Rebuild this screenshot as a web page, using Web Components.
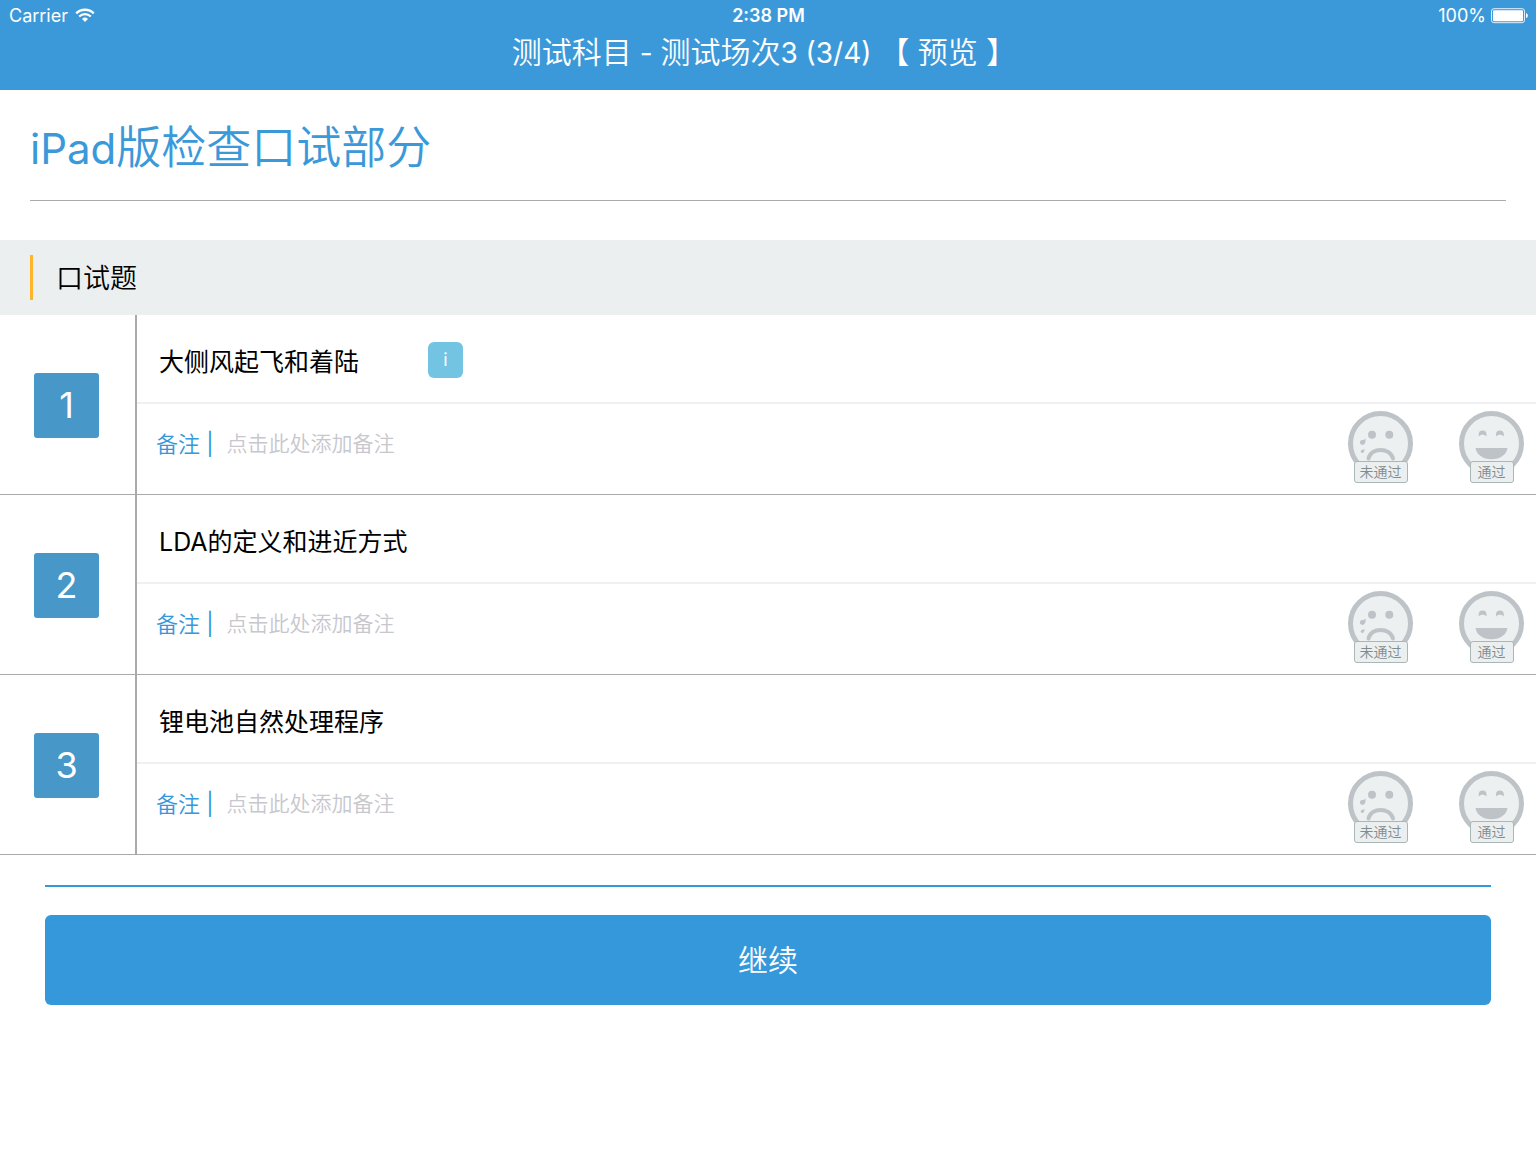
<!DOCTYPE html>
<html lang="zh-CN">
<head>
<meta charset="utf-8">
<meta name="viewport" content="width=device-width, initial-scale=1">
<title>测试科目</title>
<style>
  :root { --blue: #3b99d9; --line: #aaaaaa; --pale: #ebeff0; }
  body { margin: 0; background: #fff; color: #000; font-family: Inter, "Noto Sans CJK SC", sans-serif; font-weight: 400; }
</style>
</head>
<body>
<exam-page></exam-page>

<template id="t-page">
  <style>
    :host { display: block; }
    .latin { font-weight: 400; line-height: 1; }
    exam-header .latin { font-size: 28px; }
    page-title .latin { font-size: 42px; }
    .foot { margin: 30px 45px 0; border-top: 2px solid #3498db; padding-top: 28px; }
    button { display: block; width: 100%; height: 90px; border: 0; border-radius: 6px; background: #3498db; color: #fff; font: 350 30px/40px Inter, "Noto Sans CJK SC", sans-serif; }
  </style>
  <exam-header><span slot="title">测试科目<span class="latin"> - </span>测试场次<span class="latin">3 (3/4) </span>【 预览 】</span></exam-header>
  <main>
    <page-title><span class="latin">iPad</span>版检查口试部分</page-title>
    <section-title>口试题</section-title>
    <oral-question number="1" info>大侧风起飞和着陆</oral-question>
    <oral-question number="2">LDA的定义和进近方式</oral-question>
    <oral-question number="3">锂电池自然处理程序</oral-question>
    <div class="foot"><button type="button">继续</button></div>
  </main>
</template>

<template id="t-header">
  <style>
    :host { display: block; background: var(--blue); color: #fff; height: 90px; }
    .status { display: grid; grid-template-columns: 1fr auto 1fr; align-items: center; height: 31px; padding: 0 8px 0 9px; font-size: 18px; line-height: 22px; }
    .side { display: flex; align-items: center; gap: 7px; }
    .end { justify-content: flex-end; gap: 5px; }
    .time { font-weight: 600; }
    svg { display: block; }
    h1 { margin: 0; padding-right: 8px; font-size: 30px; line-height: 43px; font-weight: 350; text-align: center; }
  </style>
  <div class="status">
    <div class="side"><span>Carrier</span>
      <svg width="20" height="15" viewBox="0 0 20 15" fill="none" stroke="#fff" aria-hidden="true">
        <path d="M1.2 5.4a12.4 12.4 0 0 1 17.6 0" stroke-width="2.3"/>
        <path d="M4.2 8.5a8.2 8.2 0 0 1 11.6 0" stroke-width="2.1"/>
        <path d="M10 14l-3-3.1a4.3 4.3 0 0 1 6 0z" fill="#fff" stroke="none"/>
      </svg>
    </div>
    <div class="time">2:38 PM</div>
    <div class="side end"><span>100%</span>
      <svg width="37" height="16" viewBox="0 0 37 16" aria-hidden="true">
        <rect x=".5" y=".7" width="33" height="14" rx="2.4" fill="none" stroke="#fff" stroke-opacity=".85"/>
        <rect x="2" y="2.2" width="30" height="11" rx="1" fill="#fff"/>
        <path d="M35 5.3c1.2.2 1.8 1.2 1.8 2.4s-.6 2.2-1.8 2.4z" fill="#fff"/>
      </svg>
    </div>
  </div>
  <h1><slot name="title"></slot></h1>
</template>

<template id="t-title">
  <style>
    :host { display: block; padding: 0 30px; margin-bottom: 39px; }
    h2 { margin: 0; padding: 25px 0 19px; border-bottom: 1px solid var(--line); color: var(--blue); font-size: 45px; line-height: 66px; font-weight: 350; }
  </style>
  <h2><slot></slot></h2>
</template>

<template id="t-section">
  <style>
    :host { display: block; background: var(--pale); padding: 15px 30px; }
    h3 { margin: 0; border-left: 3px solid #fdb52c; padding: 2px 0 0 23px; font-size: 27px; line-height: 43px; font-weight: 350; }
  </style>
  <h3><slot></slot></h3>
</template>

<template id="t-question">
  <style>
    :host { display: flex; border-bottom: 1px solid var(--line); }
    .no { box-sizing: border-box; width: 137px; flex: none; border-right: 2px solid var(--line); display: flex; align-items: center; justify-content: center; padding: 2px 2px 0 0; }
    .no b { width: 65px; height: 65px; border-radius: 3px; background: #4897c9; color: #fff; font-size: 36px; font-weight: 400; line-height: 65px; text-align: center; }
    .body { flex: 1; min-width: 0; }
    .top { display: flex; align-items: center; gap: 69px; height: 84px; padding: 3px 22px 0; border-bottom: 2px solid #efeff4; }
    .q { padding-top: 3px; font-size: 25px; line-height: 38px; }
    .info { width: 35px; height: 36px; border: 0; padding: 0; border-radius: 6px; background: #73c4e3; color: #fff; font: 400 18px/36px Inter, sans-serif; }
    .bottom { display: flex; align-items: flex-start; gap: 46px; height: 83px; padding: 7px 12px 0 19px; }
    .note { flex: 1; display: flex; align-items: center; gap: 13px; height: 66px; }
    .note label { color: #3498db; font-size: 22px; line-height: 33px; font-weight: 350; white-space: nowrap; }
    .note label span { font-weight: 400; }
    .note input { flex: 1; min-width: 0; border: 0; padding: 0; background: none; outline: 0; color: #000; font: 350 21px/30px Inter, "Noto Sans CJK SC", sans-serif; }
    .note input::placeholder { color: #c7c7cd; opacity: 1; }
  </style>
  <div class="no"><b></b></div>
  <div class="body">
    <div class="top"><span class="q"><slot></slot></span></div>
    <div class="bottom">
      <div class="note"><label for="note">备注 <span>|</span></label><input id="note" type="text" placeholder="点击此处添加备注"></div>
      <face-choice mood="sad">未通过</face-choice>
      <face-choice mood="happy">通过</face-choice>
    </div>
  </div>
</template>

<template id="t-face">
  <style>
    :host { display: block; width: 65px; flex: none; }
    button { display: flex; flex-direction: column; align-items: center; width: 65px; border: 0; padding: 0; background: none; font: 350 14px/20px Inter, "Noto Sans CJK SC", sans-serif; }
    svg { display: block; flex: none; }
    .tag { position: relative; margin-top: -15px; padding: 0 5px; border: 1px solid #a9b7b7; border-radius: 3px; background: var(--pale); color: #7f8c8d; white-space: nowrap; }
    :host([mood="happy"]) .tag { padding: 0 7px; }
    .sad, .happy { display: none; }
    :host([mood="sad"]) .sad, :host([mood="happy"]) .happy { display: inline; }
  </style>
  <button type="button">
    <svg width="65" height="65" viewBox="0 0 65 65" aria-hidden="true">
      <circle cx="32.5" cy="32.5" r="30" fill="#ecf0f1" stroke="#bdc3c7" stroke-width="5"/>
      <g class="sad" fill="#bdc3c7">
        <circle cx="24" cy="23.7" r="4"/><circle cx="41.3" cy="23.7" r="4"/>
        <path d="M20.5 47.5c3-11.5 21-11.5 24.5 0" fill="none" stroke="#bdc3c7" stroke-width="4" stroke-linecap="round"/>
        <path d="M17.6 27.6c.3 3.400-.6 6.300-3.200 6.300-3.200 0-3.300-4.300-.3-4.800 1.400-.1 2.500-.4 3.500-1.500z"/>
        <path d="M16.500 37.800c.2 2.200-.4 4.200-2.100 4.200-2.200 0-2.200-2.900-.2-3.200 1-.1 1.700-.3 2.300-1z"/>
      </g>
      <g class="happy" fill="#bdc3c7">
        <path d="M16.500 37h32c-.8 6.500-7.500 11.300-16 11.300S17.300 43.500 16.500 37z"/>
        <path d="M19.700 25.500v-2a3.900 3.900 0 0 1 7.800 0v2c-1.600-2.400-6.200-2.400-7.800 0z"/>
        <path d="M37 25.500v-2a3.900 3.900 0 0 1 7.800 0v2c-1.600-2.400-6.200-2.400-7.800 0z"/>
      </g>
    </svg>
    <span class="tag"><slot></slot></span>
  </button>
</template>

<script>
  class TemplateElement extends HTMLElement {
    constructor() {
      super();
      this.attachShadow({ mode: "open" })
        .append(document.getElementById(this.constructor.template).content.cloneNode(true));
    }
  }
  class ExamHeader extends TemplateElement { static template = "t-header"; }
  class PageTitle extends TemplateElement { static template = "t-title"; }
  class SectionTitle extends TemplateElement { static template = "t-section"; }
  class FaceChoice extends TemplateElement { static template = "t-face"; }
  class OralQuestion extends TemplateElement {
    static template = "t-question";
    connectedCallback() {
      this.shadowRoot.querySelector("b").textContent = this.getAttribute("number");
      if (this.hasAttribute("info") && !this.shadowRoot.querySelector(".info")) {
        const info = document.createElement("button");
        info.type = "button";
        info.className = "info";
        info.textContent = "i";
        this.shadowRoot.querySelector(".top").append(info);
      }
    }
  }
  class ExamPage extends TemplateElement { static template = "t-page"; }
  customElements.define("exam-header", ExamHeader);
  customElements.define("page-title", PageTitle);
  customElements.define("section-title", SectionTitle);
  customElements.define("face-choice", FaceChoice);
  customElements.define("oral-question", OralQuestion);
  customElements.define("exam-page", ExamPage);
</script>
</body>
</html>
